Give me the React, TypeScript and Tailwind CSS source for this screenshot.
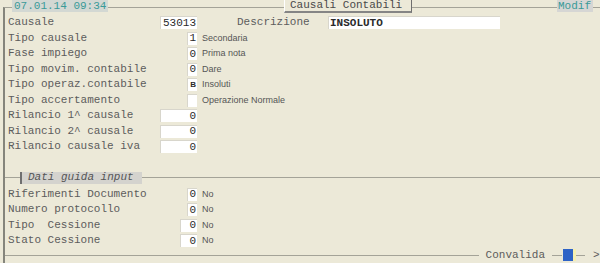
const mono = "font-['Liberation_Mono','Courier_New',monospace]";
const sans = "font-['Liberation_Sans',Arial,sans-serif]";

type RowProps = {
  label: string;
  value?: string;
  box: string;
  desc?: string;
  small?: boolean;
};

function Field({ value, box, small }: { value?: string; box: string; small?: boolean }) {
  return (
    <span
      className={`flex h-[13px] ${box} items-center justify-end border-l border-t border-[#d8d6cc] bg-white pr-[1px] text-[#2a2a2a] ${
        small ? `${sans} text-[8px] font-bold` : "text-[11px]"
      }`}
    >
      {value}
    </span>
  );
}

function Row({ label, value, box, desc, small }: RowProps) {
  return (
    <div className="flex h-[15.5px] items-center">
      <div className="flex w-[189px] items-center justify-between">
        <span className="whitespace-pre text-[11px] text-[#5c5c5c]">{label}</span>
        <Field value={value} box={box} small={small} />
      </div>
      {desc && <span className={`ml-[5px] ${sans} text-[9px] text-[#555555]`}>{desc}</span>}
    </div>
  );
}

export default function App() {
  return (
    <div className={`h-[263px] w-[600px] overflow-hidden bg-[#ece9d8] ${mono} leading-none`}>
      {/* header */}
      <div className="flex h-[14px] items-start">
        <div className="w-[3px]" />
        <div className="mt-[7px] h-[7px] w-[9px] border-l-2 border-t border-l-[#85857c] border-t-[#a4a398]" />
        <div className="flex h-[12px] w-[96px] items-center bg-[#d3d8d3] pl-[2px] text-[11px] text-[#3a9a98]">
          07.01.14 09:34
        </div>
        <div className="mt-[7px] w-[176px] border-t border-[#a4a398]" />
        <div className="flex h-[13px] w-[128px] items-center border-b-2 border-l border-r border-b-[#858585] border-l-white border-r-[#6f6f6f] pl-[5px] text-[11px] text-[#4a4a4a]">
          Causali Contabili
        </div>
        <div className="mt-[7px] flex-1 border-t border-[#a4a398]" />
        <div className="flex h-[12px] w-[36px] items-center bg-[#d6d6d4] pl-[1px] text-[11px] text-[#3a9a98]">
          Modif
        </div>
        <div className="mt-[7px] w-[7px] border-t border-[#a4a398]" />
      </div>

      {/* body */}
      <div className="ml-[3px] flex h-[249px] flex-col border-l-2 border-[#85857c]">
        <div className="pl-[3px] pt-[1px]">
          <div className="flex h-[15.5px] items-center">
            <div className="flex w-[189px] items-center justify-between">
              <span className="text-[11px] text-[#5c5c5c]">Causale</span>
              <Field value="53013" box="w-[37px]" />
            </div>
            <span className="ml-[40px] w-[91px] text-[11px] text-[#5c5c5c]">Descrizione</span>
            <span className="flex h-[13px] w-[172px] items-center border-l border-t border-[#d8d6cc] bg-white pl-[1px] text-[11px] font-bold text-[#2a2a2a]">
              INSOLUTO
            </span>
          </div>
          <Row label="Tipo causale" value="1" box="w-[10px]" desc="Secondaria" />
          <Row label="Fase impiego" value="0" box="w-[10px]" desc="Prima nota" />
          <Row label="Tipo movim. contabile" value="0" box="w-[10px]" desc="Dare" />
          <Row label="Tipo operaz.contabile" value="B" box="w-[10px]" desc="Insoluti" small />
          <Row label="Tipo accertamento" value="" box="w-[10px]" desc="Operazione Normale" />
          <Row label="Rilancio 1^ causale" value="0" box="w-[37px]" />
          <Row label="Rilancio 2^ causale" value="0" box="w-[37px]" />
          <Row label="Rilancio causale iva" value="0" box="w-[37px]" />
        </div>

        {/* section divider */}
        <div className="mt-[17px] flex h-[12px] items-center">
          <div className="w-[15px] border-t border-[#a4a398]" />
          <div className="flex h-[12px] w-[122px] items-center border-l-2 border-[#6f6f6f] bg-[#d4d3ce] pl-[6px] text-[11px] italic text-[#555555]">
            Dati guida input
          </div>
          <div className="flex-1 border-t border-[#a4a398]" />
        </div>

        <div className="mt-[3px] pl-[3px]">
          <Row label="Riferimenti Documento" value="0" box="w-[10px]" desc="No" />
          <Row label="Numero protocollo" value="0" box="w-[10px]" desc="No" />
          <Row label="Tipo  Cessione" value="0" box="w-[17px]" desc="No" />
          <Row label="Stato Cessione" value="0" box="w-[17px]" desc="No" />
        </div>

        {/* footer */}
        <div className="mt-auto mb-[1px] flex h-[14px] items-center">
          <div className="flex-1 border-t border-[#a4a398]" />
          <span className="mx-[7px] text-[11px] text-[#5c5c5c]">Convalida</span>
          <div className="w-[10px] border-t border-[#a4a398]" />
          <div className="ml-[1px] flex h-[12px] w-[13px]">
            <div className="w-[10px] bg-[#2e63c6]" />
            <div className="w-[3px] bg-[#f6f0b0]" />
          </div>
          <div className="w-[9px] border-t border-[#a4a398]" />
          <span className="ml-[8px] w-[7px] text-[11px] text-[#5c5c5c]">&gt;</span>
        </div>
      </div>
    </div>
  );
}
